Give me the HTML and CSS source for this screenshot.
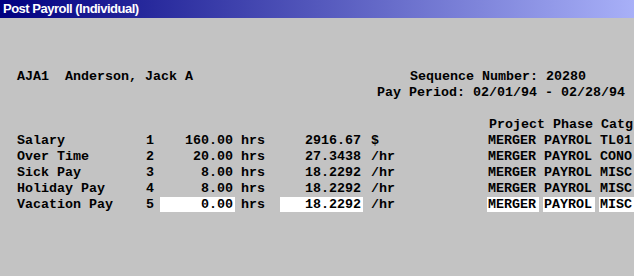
FILE: index.html
```html
<!DOCTYPE html>
<html lang="en">
<head>
    <meta charset="UTF-8">
    <title>Post Payroll (Individual)</title>
    <link rel="stylesheet" href="styles.css">
</head>
<body>
    <div class="titlebar">Post Payroll (Individual)</div>
    <div class="window">
        <div class="info">
            <div class="employee">AJA1&nbsp;&nbsp;Anderson, Jack A</div>
            <div class="period">
                <div class="seq">Sequence Number: 20280</div>
                <div class="dates">Pay Period: 02/01/94 - 02/28/94</div>
            </div>
        </div>
        <div class="pay-table">
            <div class="head">Project Phase Catg</div>
            <div class="row">
                <span class="label">Salary</span>
                <span class="num">1</span>
                <span class="qty">160.00</span>
                <span class="qty-unit">hrs</span>
                <span class="rate">2916.67</span>
                <span class="rate-unit">$</span>
                <span class="code">MERGER</span>
                <span class="code">PAYROL</span>
                <span class="code">TL01</span>
            </div>
            <div class="row">
                <span class="label">Over Time</span>
                <span class="num">2</span>
                <span class="qty">20.00</span>
                <span class="qty-unit">hrs</span>
                <span class="rate">27.3438</span>
                <span class="rate-unit">/hr</span>
                <span class="code">MERGER</span>
                <span class="code">PAYROL</span>
                <span class="code">CONO</span>
            </div>
            <div class="row">
                <span class="label">Sick Pay</span>
                <span class="num">3</span>
                <span class="qty">8.00</span>
                <span class="qty-unit">hrs</span>
                <span class="rate">18.2292</span>
                <span class="rate-unit">/hr</span>
                <span class="code">MERGER</span>
                <span class="code">PAYROL</span>
                <span class="code">MISC</span>
            </div>
            <div class="row">
                <span class="label">Holiday Pay</span>
                <span class="num">4</span>
                <span class="qty">8.00</span>
                <span class="qty-unit">hrs</span>
                <span class="rate">18.2292</span>
                <span class="rate-unit">/hr</span>
                <span class="code">MERGER</span>
                <span class="code">PAYROL</span>
                <span class="code">MISC</span>
            </div>
            <div class="row editing">
                <span class="label">Vacation Pay</span>
                <span class="num">5</span>
                <span class="qty">0.00</span>
                <span class="qty-unit">hrs</span>
                <span class="rate">18.2292</span>
                <span class="rate-unit">/hr</span>
                <span class="code">MERGER</span>
                <span class="code">PAYROL</span>
                <span class="code">MISC</span>
            </div>
        </div>
    </div>
</body>
</html>
```

FILE: styles.css
```css
body {
    margin: 0;
    padding: 0;
    background-color: #c3c3c3;
    overflow: hidden;
}
.titlebar {
    height: 18px;
    line-height: 18px;
    padding-left: 3px;
    background: linear-gradient(90deg, #000080, #a8b0f8);
    color: white;
    font-family: 'Liberation Sans', Arial, sans-serif;
    font-weight: bold;
    font-size: 13px;
    letter-spacing: -0.5px;
    white-space: nowrap;
}
.window {
    padding-top: 51px;
    font-family: 'Liberation Mono', 'Courier New', monospace;
    font-weight: bold;
    font-size: 13.333px;
    line-height: 16px;
    color: black;
    white-space: nowrap;
}
.info {
    display: flex;
}
.employee {
    width: 360px;
    padding-left: 17px;
}
.seq {
    padding-left: 33px;
}
.pay-table {
    margin-top: 16px;
}
.head {
    padding-left: 489px;
}
.row {
    display: flex;
    height: 16px;
}
.row span {
    display: block;
    height: 15px;
    flex-shrink: 0;
}
.label {
    width: 129px;
    padding-left: 17px;
}
.num {
    width: 14px;
}
.qty {
    width: 73px;
    padding-right: 2px;
    text-align: right;
}
.qty-unit {
    width: 39px;
    padding-left: 6px;
}
.rate {
    width: 81px;
    padding-right: 2px;
    text-align: right;
}
.rate-unit {
    width: 116px;
    padding-left: 8px;
}
.code {
    width: 51px;
    padding-left: 1px;
    margin-right: 4px;
}
.editing .qty,
.editing .rate,
.editing .code {
    background: white;
}
```
